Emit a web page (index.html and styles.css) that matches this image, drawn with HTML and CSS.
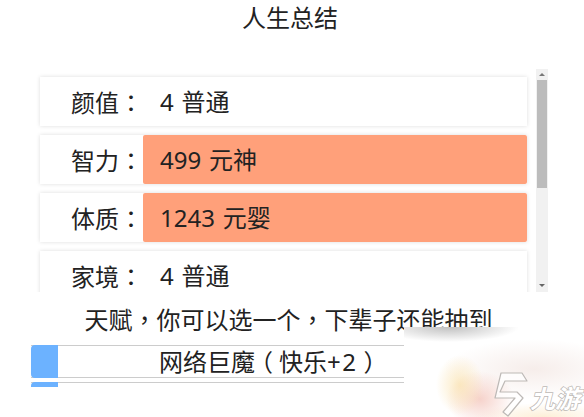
FILE: index.html
```html
<!DOCTYPE html>
<html lang="zh-CN">

<head>
  <meta charset="UTF-8">
  <title>人生总结</title>
  <link rel="stylesheet" href="styles.css">
</head>

<body>
  <div class="page">
    <h1 class="title">人生总结</h1>

    <div class="panel">
      <div class="list">
        <div class="row">
          <span class="label">颜值<span class="punct" lang="zh-TW">：</span></span>
          <span class="value">4 普通</span>
        </div>
        <div class="row">
          <span class="label">智力<span class="punct" lang="zh-TW">：</span></span>
          <span class="value high">499 元神</span>
        </div>
        <div class="row">
          <span class="label">体质<span class="punct" lang="zh-TW">：</span></span>
          <span class="value high">1243 元婴</span>
        </div>
        <div class="row">
          <span class="label">家境<span class="punct" lang="zh-TW">：</span></span>
          <span class="value">4 普通</span>
        </div>
      </div>
      <div class="scrollbar">
        <span class="arrow up"></span>
        <span class="thumb"></span>
        <span class="arrow down"></span>
      </div>
    </div>

    <p class="prompt">天赋<span class="punct" lang="zh-TW">，</span>你可以选一个<span class="punct" lang="zh-TW">，</span>下辈子还能抽到</p>

    <div class="talents">
      <div class="talent">
        <span class="mark"></span>
        <span class="name">网络巨魔<span class="paren">（</span>快乐<span class="plus">+2</span><span class="paren">）</span></span>
      </div>
      <div class="talent">
        <span class="mark"></span>
      </div>
    </div>
  </div>

  <!-- 水印 -->
  <div class="watermark">
    <svg class="logo" viewBox="0 0 36 45" width="36" height="45">
      <path d="M7 1H28L33 9H11L6 20H23L29 26L14 44L9 40L21 26H1Z" fill="#fff" fill-opacity=".75" stroke="#bdb9b6" stroke-width="1.2" stroke-linejoin="round"/>
    </svg>
    <span class="brand">九游</span>
  </div>
</body>

</html>
```

FILE: styles.css
```css
* {
  box-sizing: border-box;
}

body {
  margin: 0;
  background: #fff;
  color: #222;
  font-family: "Noto Sans", "Noto Sans CJK SC", sans-serif;
  overflow: hidden;
}

.page {
  width: 580px;
  height: 417px;
}

.title {
  margin: 0;
  height: 69px;
  font-size: 24px;
  font-weight: normal;
  line-height: 35px;
  text-align: center;
}

.punct {
  font-family: "Noto Sans CJK TC", sans-serif;
}

.panel {
  display: flex;
  height: 223px;
  padding-left: 36px;
}

.list {
  width: 495px;
  height: 223px;
  padding: 8px 4px 0;
  overflow: hidden;
}

.row {
  display: flex;
  height: 49px;
  margin-bottom: 9px;
  background: #fff;
  font-size: 24px;
  line-height: 49px;
  word-spacing: 1.5px;
  box-shadow: 0 0 4px #ddd;
}

.label {
  width: 103px;
  flex: none;
  padding-left: 31px;
}

.value {
  flex: 1;
  padding-left: 17px;
  border-radius: 2px;
}

.high {
  background: #ffa07a;
}

.scrollbar {
  display: flex;
  flex-direction: column;
  align-items: center;
  width: 12px;
  margin-left: 5px;
  background: #f1f1f1;
}

.arrow {
  width: 0;
  height: 0;
  border-left: 3px solid transparent;
  border-right: 3px solid transparent;
}

.up {
  margin: 4px 0;
  border-bottom: 3px solid #777;
}

.thumb {
  width: 10px;
  height: 108px;
  background: #bcbcbc;
}

.down {
  margin-top: auto;
  margin-bottom: 5px;
  border-top: 3px solid #666;
}

.prompt {
  margin: 0;
  height: 53px;
  padding-right: 3px;
  font-size: 24px;
  line-height: 54px;
  text-align: center;
}

.talents {
  width: 477px;
  height: 42px;
  margin-left: 31px;
  overflow: hidden;
}

.talent {
  display: flex;
  height: 33px;
  margin-bottom: 4px;
  border-top: 1px solid #ccc;
  border-bottom: 1px solid #ccc;
  font-size: 24px;
  line-height: 31px;
}

.mark {
  width: 27px;
  margin: -1px 0;
  border-radius: 4px 0 0 4px;
  background: #6cb2ff;
}

.name {
  flex: 1;
  padding-left: 101px;
  white-space: nowrap;
}

/* 括号居中 */
.paren {
  padding: 0 6px;
  font-feature-settings: "halt";
}

.plus {
  letter-spacing: 1.5px;
}

.watermark {
  position: absolute;
  left: 404px;
  top: 327px;
  width: 180px;
  height: 90px;
  overflow: hidden;
  background:
    radial-gradient(ellipse 70px 15px at 45px 0, rgba(140, 140, 140, .55), rgba(140, 140, 140, 0)),
    radial-gradient(ellipse 24px 30px at 56px 58px, rgba(250, 225, 170, .7), rgba(250, 225, 170, 0)),
    radial-gradient(ellipse 34px 28px at 76px 72px, rgba(243, 195, 185, .75), rgba(243, 195, 185, 0)),
    radial-gradient(ellipse 90px 30px at 130px 42px, rgba(240, 225, 220, .6), rgba(240, 225, 220, 0)),
    radial-gradient(ellipse 70px 14px at 140px 90px, rgba(252, 235, 205, .8), rgba(252, 235, 205, 0)),
    #fff;
}

.logo {
  position: absolute;
  left: 90px;
  top: 45px;
}

.brand {
  position: absolute;
  left: 126px;
  top: 56px;
  font-family: "Noto Sans CJK SC", sans-serif;
  font-size: 25px;
  font-style: italic;
  font-weight: bold;
  line-height: 28px;
  color: #fff;
  -webkit-text-stroke: 1.5px #bdb9b6;
  paint-order: stroke fill;
}
```
